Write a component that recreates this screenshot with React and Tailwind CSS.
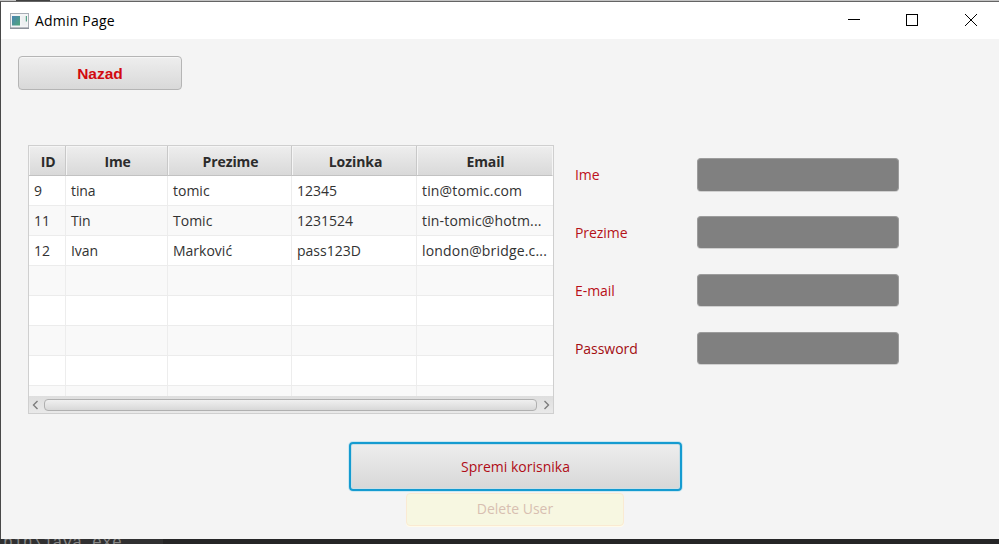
import React from 'react';

const columns = [
  { label: 'ID', width: 'w-[37px]', pad: 'pl-[2px]', track: 'tracking-[-0.3px]', cell: 'tracking-[-0.1px]' },
  { label: 'Ime', width: 'w-[102px]', pad: 'pl-[2px]', track: 'tracking-[-0.2px]', cell: 'tracking-[-0.1px]' },
  { label: 'Prezime', width: 'w-[124px]', pad: 'pl-[2px]', track: 'tracking-[-0.1px]', cell: 'tracking-normal' },
  { label: 'Lozinka', width: 'w-[125px]', pad: 'pl-[3px]', track: 'tracking-[-0.05px]', cell: 'tracking-normal' },
  { label: 'Email', width: 'w-[136px]', pad: 'pl-[2px]', track: 'tracking-[-0.1px]', cell: 'tracking-[0.17px]' },
];

const rows = [
  ['9', 'tina', 'tomic', '12345', 'tin@tomic.com'],
  ['11', 'Tin', 'Tomic', '1231524', 'tin-tomic@hotm...'],
  ['12', 'Ivan', 'Marković', 'pass123D', 'london@bridge.c...'],
  [], [], [], [], [],
];

const fields = [
  { label: 'Ime', color: 'text-[#bd1020]', height: 'h-[33px]' },
  { label: 'Prezime', color: 'text-[#b51218]', height: 'h-[32px]' },
  { label: 'E-mail', color: 'text-[#b80f18]', height: 'h-[32px]' },
  { label: 'Password', color: 'text-[#a30c12]', height: 'h-[32px]' },
];

function TitleBar() {
  return (
    <header className="flex h-[37px] shrink-0 items-center bg-white pl-[9px]">
      <svg width="19" height="16" viewBox="0 0 19 16" className="shrink-0">
        <defs>
          <linearGradient id="pane" x1="0" y1="0" x2="1" y2="1">
            <stop offset="0" stopColor="#4b83b3" />
            <stop offset="1" stopColor="#4fa779" />
          </linearGradient>
        </defs>
        <rect x="0.5" y="0.5" width="18" height="14.5" fill="#f4f5f6" stroke="#a7adb5" />
        <path d="M0 15.3h19" stroke="#858b93" strokeWidth="1.2" />
        <rect x="2" y="3" width="8" height="9.5" fill="url(#pane)" />
        <rect x="11.5" y="3" width="5.5" height="9.5" fill="#edf0f1" />
        <path d="M16.4 3v5.5" stroke="#58a389" strokeWidth="1.2" />
      </svg>
      <h1 className="ml-[6px] grow text-[14px] leading-5 tracking-[0.2px] text-black">Admin Page</h1>
      <svg width="151" height="37" viewBox="848 2 151 37" fill="none" stroke="#000" shapeRendering="crispEdges">
        <path d="M848 19.5h12" />
        <rect x="906.5" y="14.5" width="11" height="11" />
        <path d="M965 14l12 12M977 14l-12 12" shapeRendering="auto" />
      </svg>
    </header>
  );
}

function UserTable() {
  return (
    <section className="flex h-[269px] w-[526px] flex-col border border-[#cfcfcf] bg-white">
      <div className="flex h-[30px] shrink-0">
        {columns.map((c) => (
          <div
            key={c.label}
            className={`${c.width} ${c.pad} ${c.track} flex items-center justify-center border-r border-b border-r-[#c8c8c8] border-b-[#c2c2c2] bg-linear-to-b from-[#eeeeee] to-[#d9d9d9] pt-[2px] text-[14px] font-bold text-[#2c2c2c] shadow-[inset_1px_1px_0_#f5f5f5] last:border-r-[#f5f5f5]`}
          >
            {c.label}
          </div>
        ))}
      </div>
      <div className="h-[220px] overflow-hidden">
        {rows.map((row, i) => (
          <div key={i} className="flex h-[30px] border-b border-[#ececec] odd:bg-white even:bg-[#f9f9f9]">
            {columns.map((c, j) => (
              <div
                key={c.label}
                className={`${c.width} ${c.cell} flex items-center border-r border-[#ededed] pl-[5px] text-[14px] whitespace-nowrap text-[#323232] last:border-r-0`}
              >
                {row[j]}
              </div>
            ))}
          </div>
        ))}
      </div>
      <div className="flex h-[17px] shrink-0 items-center justify-between bg-linear-to-b from-[#dedede] to-[#e9e9e9] px-[3px] pt-px">
        <svg width="7" height="10" viewBox="0 0 7 10" fill="none" stroke="#7c7c7c" strokeWidth="1.4">
          <path d="M5.5 1L1.5 5l4 4" />
        </svg>
        <div className="ml-[5px] h-[12px] grow rounded-[4px] border border-[#b0b0b0] bg-linear-to-b from-[#f0f0f0] to-[#d8d8d8]" />
        <svg width="7" height="10" viewBox="0 0 7 10" fill="none" stroke="#7c7c7c" strokeWidth="1.4" className="ml-[6px]">
          <path d="M1.5 1l4 4-4 4" />
        </svg>
      </div>
    </section>
  );
}

function UserForm() {
  return (
    <form className="ml-[21px] flex flex-col gap-[25px] pt-[13px]">
      {fields.map((f) => (
        <label key={f.label} className="flex h-[33px] items-start">
          <span className={`${f.color} w-[122px] text-[14px] leading-[33px] tracking-[-0.05px]`}>{f.label}</span>
          <span className={`${f.height} w-[202px] rounded-[4px] border border-[#9c9c9c] border-b-[#808080] bg-[#808080] shadow-[0_1px_0_#d0d0d0]`} />
        </label>
      ))}
    </form>
  );
}

export default function App() {
  return (
    <div className="flex h-[544px] w-[999px] flex-col overflow-hidden bg-[#252526] font-['Open_Sans','Noto_Sans',sans-serif]">
      <div className="flex h-px shrink-0 bg-[#c3c3c3]">
        <div className="ml-4 w-[34px] bg-[#404040]" />
      </div>
      <div className="flex h-[538px] shrink-0 flex-col border-t border-l border-t-[#646464] border-l-[#484848] bg-[#f4f4f4]">
        <TitleBar />
        <main className="flex grow flex-col pt-[17px]">
          <button className="ml-[17px] flex h-[34px] w-[164px] shrink-0 items-center justify-center rounded-[4px] border border-[#b5b5b5] bg-linear-to-b from-[#eeeeee] to-[#d9d9d9] pt-[2px] font-['Liberation_Sans',sans-serif] text-[15.5px] font-bold text-[#d20a10] shadow-[inset_0_1px_0_#f6f6f6]">
            Nazad
          </button>
          <div className="mt-[55px] ml-[27px] flex">
            <UserTable />
            <UserForm />
          </div>
          <button className="mt-[28px] ml-[348px] flex h-[49px] w-[333px] shrink-0 items-center justify-center rounded-[4px] border-2 border-[#159bd0] bg-linear-to-b from-[#eeeeee] to-[#d7d7d7] text-[14px] text-[#b00c16] shadow-[0_0_0_1px_#cbe7f1,inset_0_0_0_1px_#c9dfe7]">
            Spremi korisnika
          </button>
          <button className="mt-[2px] ml-[405px] flex h-[33px] w-[218px] shrink-0 items-center justify-center rounded-[4px] border border-[#faead2] bg-[#f7f7e1] pb-[2px] text-[14px] text-[#d8bfb1] shadow-[0_1px_0_#fffbea]">
            Delete User
          </button>
        </main>
      </div>
      <div className="flex h-[5px] shrink-0 items-start overflow-hidden">
        <div className="h-[5px] w-[163px] overflow-hidden bg-[#303031] pl-[3px]">
          <span className="-mt-[5px] block font-['Liberation_Mono',monospace] text-[16.5px] leading-[18px] whitespace-nowrap text-[#858585]">
            bin\java.exe
          </span>
        </div>
      </div>
    </div>
  );
}
